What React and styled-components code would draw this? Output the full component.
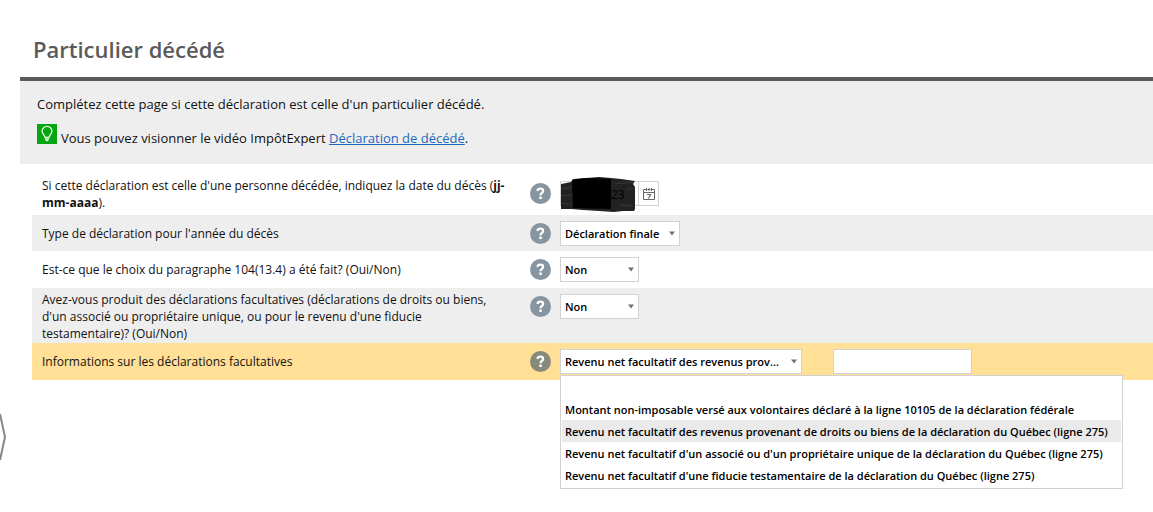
import React, { useState } from 'react'
import styled, { createGlobalStyle } from 'styled-components'

const GlobalStyle = createGlobalStyle`
  * {
    box-sizing: border-box;
  }
  body {
    margin: 0;
    background: #fff;
    color: #111;
    font-family: 'Open Sans', 'Noto Sans', sans-serif;
    font-size: 12px;
  }
`

const Page = styled.main`
  min-height: 100vh;
  padding: 35px 0 24px 20px;
`

const Title = styled.h1`
  margin: 0;
  padding: 0 13px 14px;
  border-bottom: 4px solid #595b5a;
  color: #5a5a5a;
  font-size: 22px;
  font-weight: 600;
  line-height: 28px;
`

const Intro = styled.section`
  padding: 13px 17px 16px;
  background: #eee;
  font-size: 13px;
  line-height: 20px;
`

const Paragraph = styled.p`
  display: flex;
  align-items: flex-end;
  gap: 4px;
  margin: 0 0 10px;
  &:last-child {
    margin-bottom: 0;
  }
`

const BulbIcon = styled.svg`
  flex: none;
  width: 20px;
  height: 20px;
  margin-bottom: 4px;
`

const Link = styled.a`
  color: #1b68c0;
  text-decoration: underline;
`

const Form = styled.form`
  margin-left: 12px;
`

const Row = styled.div`
  display: flex;
  align-items: ${props => (props.$tall ? 'flex-start' : 'center')};
  min-height: ${props => props.$height || 37}px;
  padding: ${props => props.$top || 0}px 0 0 10px;
  background: ${props => props.$background || '#fff'};
`

const Label = styled.label`
  flex: none;
  width: 474px;
  margin-right: 14px;
  padding-right: ${props => (props.$narrow ? 6 : 0)}px;
  line-height: 17px;
`

const Field = styled.div`
  display: flex;
  align-items: center;
  margin-top: ${props => (props.$tall ? 3 : 0)}px;
`

const HelpButton = styled.button`
  flex: none;
  width: 21px;
  height: 21px;
  margin: 0 9px 0 0;
  padding: 0;
  border: 0;
  background: none;
  cursor: pointer;
  svg {
    display: block;
  }
`

const Control = styled.div`
  position: relative;
  display: flex;
`

const SelectBox = styled(Control)`
  width: ${props => props.$width}px;
  > svg {
    position: absolute;
    top: 10px;
    right: 5px;
    pointer-events: none;
  }
`

const StyledSelect = styled.select`
  width: 100%;
  height: 25px;
  padding: 0 16px 0 4px;
  border: 1px solid #d2d2d2;
  border-radius: 0;
  background: #fff;
  color: #000;
  font-family: inherit;
  font-size: 11px;
  font-weight: 600;
  text-overflow: ellipsis;
  appearance: none;
`

const TextInput = styled.input`
  width: ${props => props.$width}px;
  height: 25px;
  padding: 0 4px;
  border: 1px solid #d2d2d2;
  background: #fff;
  font-family: inherit;
  font-size: 11px;
  font-weight: 600;
`

const AmountInput = styled(TextInput)`
  margin-left: 31px;
`

const CalendarButton = styled.button`
  display: flex;
  align-items: center;
  justify-content: center;
  width: 20px;
  height: 25px;
  padding: 0;
  border: 1px solid #d2d2d2;
  border-left: 0;
  background: #fff;
  cursor: pointer;
`

const Scribble = styled.svg`
  position: absolute;
  top: -5px;
  left: 0;
  pointer-events: none;
  text {
    font-size: 12px;
    font-weight: 500;
  }
`

const Options = styled.div`
  position: absolute;
  z-index: 1;
  top: 26px;
  left: 0;
  min-width: 563px;
  padding: 22px 1px 2px;
  border: 1px solid #d2d2d2;
  background: #fff;
`

const Option = styled.button`
  display: block;
  width: 100%;
  height: 22px;
  padding: 2px 3px 0;
  border: 0;
  background: ${props => (props.$active ? '#eaeaea' : '#fff')};
  color: #000;
  font-family: inherit;
  font-size: 11px;
  font-weight: 600;
  line-height: 20px;
  text-align: left;
  white-space: nowrap;
`

const PanelHandle = styled.button`
  position: fixed;
  top: 413px;
  left: 0;
  padding: 0;
  border: 0;
  background: none;
  cursor: pointer;
  svg {
    display: block;
  }
`

const Help = ({ color = '#8795a1' }) => (
  <HelpButton type="button" aria-label="Aide">
    <svg width="21" height="21" viewBox="0 0 21 21" fill="none">
      <circle cx="10.5" cy="10.5" r="10.5" fill={color} />
      <path d="M7.500 8C7.600 6.300 8.800 5.700 10.400 5.700c1.600 0 2.700.8 2.700 2.200 0 1.900-2.600 2-2.600 4.400" stroke="#fff" strokeWidth="2.200" />
      <rect x="9.300" y="13.500" width="2.500" height="2.500" fill="#fff" />
    </svg>
  </HelpButton>
)

const Arrow = () => (
  <svg width="6" height="5" viewBox="0 0 6 5">
    <path d="M0 .5h6L3 4.500z" fill="#707070" />
  </svg>
)

const Select = ({ id, width, options, children, ...rest }) => (
  <SelectBox $width={width}>
    <StyledSelect id={id} {...rest}>
      {options.map(option => <option key={option}>{option}</option>)}
    </StyledSelect>
    <Arrow />
    {children}
  </SelectBox>
)

const incomeTypes = [
  'Montant non-imposable versé aux volontaires déclaré à la ligne 10105 de la déclaration fédérale',
  'Revenu net facultatif des revenus provenant de droits ou biens de la déclaration du Québec (ligne 275)',
  "Revenu net facultatif d'un associé ou d'un propriétaire unique de la déclaration du Québec (ligne 275)",
  "Revenu net facultatif d'une fiducie testamentaire de la déclaration du Québec (ligne 275)"
]

const App = () => {
  const [income, setIncome] = useState(incomeTypes[1])

  return (
    <Page>
      <GlobalStyle />
      <Title>Particulier décédé</Title>
      <Intro>
        <Paragraph>Complétez cette page si cette déclaration est celle d'un particulier décédé.</Paragraph>
        <Paragraph>
          <BulbIcon viewBox="0 0 20 20" fill="none">
            <path d="M0 0h20v20H0z" fill="#06a512" />
            <path d="M8 13.500c0-2.500-2.900-3.500-2.900-6.500a4.900 4.700 0 0 1 9.800 0c0 3-2.900 4-2.900 6.500z" stroke="#e4ffe0" strokeWidth="1.300" />
            <path d="M8 15.200h4M8.700 16.500h2.600" stroke="#e4ffe0" strokeWidth="1.300" />
          </BulbIcon>
          <span>
            Vous pouvez visionner le vidéo ImpôtExpert <Link href="#video">Déclaration de décédé</Link>.
          </span>
        </Paragraph>
      </Intro>
      <Form>
        <Row $height={51} $top={8}>
          <Label htmlFor="date">
            Si cette déclaration est celle d'une personne décédée, indiquez la date du décès (<b>jj-mm-aaaa</b>).
          </Label>
          <Field>
            <Help />
            <Control>
              <TextInput id="date" type="text" $width={79} />
              <CalendarButton type="button" aria-label="Calendrier">
                <svg width="12" height="14" viewBox="0 0 12 14" fill="none" stroke="#666">
                  <path d="M3 2.500H.5v10h11v-10H9M4.500 2.500h3M.5 5.500h11M3.500 1v3M6 1v3M8.500 1v3" />
                  <path d="M4 7.500h3.500L5.500 11.500" strokeWidth="1.200" />
                </svg>
              </CalendarButton>
              <Scribble width="76" height="38" viewBox="0 0 76 38">
                <path d="M1 8l10-2 2-3 13-1 13-1 12 1 10 1 14 2-2 3 2 3v22l-1 2-11 0-9 1-15-1-16-1-12-1H1z" fill="#222" />
                <path d="M1 13l11-2M1 20l11-1M2 27l9 2M55 8l18-2M66 14l8-2M60 29l13 1" stroke="#383838" />
                <path d="M12 4l13-2 26 1v30l-38-1z" fill="#000" />
                <text x="51" y="23" fill="#000">23</text>
              </Scribble>
            </Control>
          </Field>
        </Row>
        <Row $height={36} $background="#eee">
          <Label htmlFor="return-type">Type de déclaration pour l'année du décès</Label>
          <Field>
            <Help />
            <Select id="return-type" width={120} options={['Déclaration finale']} />
          </Field>
        </Row>
        <Row>
          <Label htmlFor="choice">Est-ce que le choix du paragraphe 104(13.4) a été fait? (Oui/Non)</Label>
          <Field>
            <Help />
            <Select id="choice" width={79} options={['Non', 'Oui']} />
          </Field>
        </Row>
        <Row $tall $height={55} $top={3} $background="#eee">
          <Label htmlFor="optional" $narrow>
            Avez-vous produit des déclarations facultatives (déclarations de droits ou biens, d'un associé ou propriétaire unique, ou pour le revenu d'une fiducie testamentaire)? (Oui/Non)
          </Label>
          <Field $tall>
            <Help />
            <Select id="optional" width={79} options={['Non', 'Oui']} />
          </Field>
        </Row>
        <Row $background="#ffe096">
          <Label htmlFor="income">Informations sur les déclarations facultatives</Label>
          <Field>
            <Help color="#87897b" />
            <Select
              id="income"
              width={242}
              options={incomeTypes}
              value={income}
              onChange={event => setIncome(event.target.value)}
            >
              <Options role="listbox">
                {incomeTypes.map(type => (
                  <Option
                    key={type}
                    type="button"
                    role="option"
                    aria-selected={type === income}
                    $active={type === income}
                    onClick={() => setIncome(type)}
                  >
                    {type}
                  </Option>
                ))}
              </Options>
            </Select>
            <AmountInput type="text" aria-label="Montant" $width={139} />
          </Field>
        </Row>
      </Form>
      <PanelHandle type="button" aria-label="Ouvrir le panneau">
        <svg width="8" height="48" viewBox="0 0 8 48" fill="none">
          <path d="M0 1l5 23-5 23" stroke="#888" strokeWidth="2" />
        </svg>
      </PanelHandle>
    </Page>
  )
}

export default App
